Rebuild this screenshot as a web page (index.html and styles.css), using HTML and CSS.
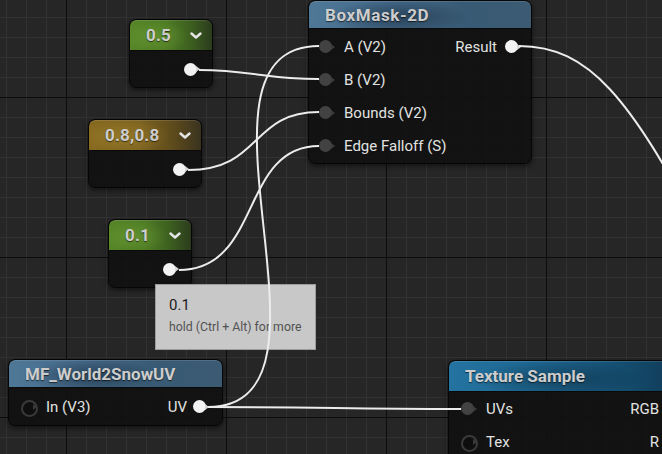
FILE: index.html
```html
<!DOCTYPE html>
<html>
<head>
<meta charset="utf-8">
<link rel="stylesheet" href="styles.css">
</head>
<body>
<div class="canvas">

  <div class="node const n-half">
    <div class="head green"><span class="val">0.5</span><svg class="chev" width="12" height="7" viewBox="0 0 12 7"><polyline points="1.5,1.5 6,5.5 10.5,1.5"/></svg></div>
    <div class="cbody"><span class="pin out"></span></div>
  </div>

  <div class="node const n-vec">
    <div class="head gold"><span class="val">0.8,0.8</span><svg class="chev" width="12" height="7" viewBox="0 0 12 7"><polyline points="1.5,1.5 6,5.5 10.5,1.5"/></svg></div>
    <div class="cbody"><span class="pin out"></span></div>
  </div>

  <div class="node const n-tenth">
    <div class="head green"><span class="val">0.1</span><svg class="chev" width="12" height="7" viewBox="0 0 12 7"><polyline points="1.5,1.5 6,5.5 10.5,1.5"/></svg></div>
    <div class="cbody"><span class="pin out"></span></div>
  </div>

  <div class="node n-box">
    <div class="head steel wide">BoxMask-2D</div>
    <div class="rows">
      <div class="row"><span class="port"><span class="pin in"></span><span class="lbl">A (V2)</span></span><span class="port"><span class="lbl">Result</span><span class="pin out"></span></span></div>
      <div class="row"><span class="port"><span class="pin in"></span><span class="lbl">B (V2)</span></span></div>
      <div class="row"><span class="port"><span class="pin in"></span><span class="lbl">Bounds (V2)</span></span></div>
      <div class="row"><span class="port"><span class="pin in"></span><span class="lbl">Edge Falloff (S)</span></span></div>
    </div>
  </div>

  <div class="node n-mf">
    <div class="head steel">MF_World2SnowUV</div>
    <div class="rows">
      <div class="row"><span class="port"><span class="pin empty"></span><span class="lbl">In (V3)</span></span><span class="port"><span class="lbl">UV</span><span class="pin out"></span></span></div>
    </div>
  </div>

  <div class="node n-tex">
    <div class="head ocean">Texture Sample</div>
    <div class="rows">
      <div class="row"><span class="port"><span class="pin in"></span><span class="lbl">UVs</span></span><span class="port"><span class="lbl">RGB</span><span class="pin empty"></span></span></div>
      <div class="row"><span class="port"><span class="pin empty"></span><span class="lbl">Tex</span></span><span class="port"><span class="lbl">R</span><span class="pin empty"></span></span></div>
    </div>
  </div>

  <div class="tip">
    <div class="tip-val">0.1</div>
    <div class="tip-hint">hold (Ctrl + Alt) for more</div>
  </div>

  <svg class="wires" width="662" height="454" viewBox="0 0 662 454">
    <path d="M199,70 C250,70 265,79 319,79"/>
    <path d="M188,170 C262,170 250,112 319,112"/>
    <path d="M179,270 C262,270 240,146 319,146"/>
    <path d="M208,407 C358,407 169,46 319,46"/>
    <path d="M208,407 C330,407 340,409 461,409"/>
    <path d="M519,46 C590,46 630,100 700,230"/>
  </svg>

</div>
</body>
</html>
```

FILE: styles.css
```css
* { box-sizing: border-box; }

html, body {
  margin: 0;
  padding: 0;
  width: 662px;
  height: 454px;
  overflow: hidden;
  background: #262626;
}

.canvas {
  position: relative;
  width: 662px;
  height: 454px;
  overflow: hidden;
  font-family: Roboto, "Liberation Sans", sans-serif;
  background-color: #262626;
  background-image:
    linear-gradient(to right, #0c0c0c 1px, transparent 1px),
    linear-gradient(to bottom, #0c0c0c 1px, transparent 1px),
    linear-gradient(to right, #323232 1px, transparent 1px),
    linear-gradient(to bottom, #323232 1px, transparent 1px);
  background-size: 160px 160px, 160px 160px, 20px 20px, 20px 20px;
  background-position: 66px 0, 0 97px, 6px 0, 0 17px;
}

/* ---------- nodes ---------- */
.node {
  position: absolute;
  z-index: 1;
  background: rgba(16, 17, 16, 0.9);
  border: 1px solid #060606;
  border-radius: 7px;
  box-shadow: 0 2px 5px rgba(0, 0, 0, 0.55);
  overflow: hidden;
}

.head {
  display: flex;
  align-items: center;
  font-weight: 700;
  font-size: 17px;
  color: #cdcdcd;
  text-shadow: 0 1px 1px rgba(0, 0, 0, 0.6);
  border-bottom: 1px solid #0a0a0a;
  border-radius: 6px 6px 0 0;
  box-shadow: inset 0 1px 0 rgba(255, 255, 255, 0.12);
  white-space: nowrap;
}
.head.wide { letter-spacing: 0.6px; }

.green {
  background:
    radial-gradient(ellipse 60% 80% at 30% 55%, rgba(110, 160, 55, 0.55), transparent 70%),
    linear-gradient(90deg, #568527 0%, #4d7a24 45%, #3c5e1f 75%, #2b3c1d 100%);
}

.gold {
  background:
    radial-gradient(ellipse 60% 80% at 30% 55%, rgba(170, 140, 50, 0.45), transparent 70%),
    linear-gradient(90deg, #86691f 0%, #7d6320 45%, #5e4b1c 75%, #3a3320 100%);
}

.steel {
  background:
    radial-gradient(ellipse 45% 90% at 40% 60%, rgba(20, 35, 48, 0.55), transparent 70%),
    linear-gradient(90deg, #4f7897 0%, #44698a 35%, #385a74 70%, #3c5b73 100%);
}

.ocean {
  background:
    radial-gradient(ellipse 50% 90% at 45% 60%, rgba(10, 30, 45, 0.45), transparent 70%),
    linear-gradient(90deg, #2473a0 0%, #1d6690 40%, #154e70 70%, #0f3550 100%);
}

/* constant nodes */
.const {
  height: 69px;
}
.const .head {
  height: 31px;
  justify-content: space-between;
  padding: 0 10px 0 16px;
}
.val {
  letter-spacing: 0.2px;
}
.chev polyline {
  fill: none;
  stroke: #e4e4e4;
  stroke-width: 2.4;
  stroke-linecap: round;
  stroke-linejoin: round;
}
.cbody {
  display: flex;
  align-items: center;
  justify-content: flex-end;
  height: 36px;
  padding-right: 12px;
}

.n-half { left: 129px; top: 19px; width: 84px; }
.n-vec { left: 88px; top: 119px; width: 114px; }
.n-tenth { left: 108px; top: 219px; width: 84px; }

/* standard nodes */
.rows {
  display: flex;
  flex-direction: column;
}
.row {
  display: flex;
  align-items: center;
  justify-content: space-between;
  height: 33px;
}
.port {
  display: flex;
  align-items: center;
}
.lbl {
  font-size: 15px;
  color: #e2e2e2;
  white-space: nowrap;
}
.pin + .lbl { margin-left: 9px; }
.lbl + .pin { margin-left: 8px; }

.n-box { left: 308px; top: 0; width: 224px; height: 164px; }
.n-box .head { height: 28px; padding-left: 16px; }
.n-box .rows { padding: 1px 10px 0 10px; }

.n-mf { left: 8px; top: 359px; width: 215px; height: 67px; }
.n-mf .head { height: 28px; padding-left: 16px; }
.n-mf .rows { padding: 2px 13px 0 12px; }
.n-mf .lbl + .pin { margin-left: 6px; }

.n-tex { left: 448px; top: 360px; width: 246px; height: 120px; }
.n-tex .head { height: 31px; padding-left: 16px; }
.n-tex .rows { padding: 0 10px 0 12px; }

/* pins */
.pin {
  position: relative;
  display: inline-block;
  width: 16px;
  height: 13px;
  flex: none;
}
.pin::before {
  content: "";
  position: absolute;
  left: 0;
  top: 0;
  width: 13px;
  height: 13px;
  border-radius: 50%;
}
.pin::after {
  content: "";
  position: absolute;
  left: 12px;
  top: 3.5px;
  border-top: 3px solid transparent;
  border-bottom: 3px solid transparent;
  border-left: 4px solid;
}
.pin.out::before { background: #f2f2f2; }
.pin.out::after { border-left-color: #d8d8d8; }
.pin.in::before { background: #424242; }
.pin.in::after { border-left-color: #3c3c3c; }
.pin.empty::before { background: #0e0e0e; border: 2px solid #3a3a3a; }
.pin.empty::after { border-left-color: #3a3a3a; }

/* tooltip */
.tip {
  position: absolute;
  z-index: 2;
  left: 155px;
  top: 284px;
  width: 161px;
  height: 66px;
  background: #c8c8c8;
  border: 1px solid #9c9c9c;
  padding: 11px 0 0 13px;
  color: #1c1c1c;
}
.tip-val {
  font-size: 15px;
  line-height: 18px;
}
.tip-hint {
  margin-top: 6px;
  font-size: 12.3px;
  line-height: 15px;
  color: #525252;
}

/* wires */
.wires {
  position: absolute;
  left: 0;
  top: 0;
  z-index: 3;
  pointer-events: none;
}
.wires path {
  fill: none;
  stroke: #ececec;
  stroke-width: 2;
}
```
